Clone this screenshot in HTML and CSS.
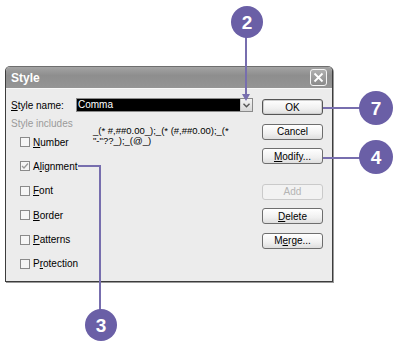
FILE: index.html
```html
<!DOCTYPE html>
<html lang="en">
<head>
    <meta charset="UTF-8">
    <title>Style</title>
    <link rel="stylesheet" href="styles.css">
</head>
<body>
    <div class="page">
        <div class="dialog">
            <div class="titlebar">
                <span class="title">Style</span>
                <span class="close">
                    <svg width="11" height="11" viewBox="0 0 11 11"><path d="M1.5 1.5 L9.5 9.5 M9.5 1.5 L1.5 9.5" stroke="#fff" stroke-width="1.8" fill="none"/></svg>
                </span>
            </div>
            <div class="dialog-body">
                <div class="left">
                    <div class="name-row">
                        <span class="name-label"><u>S</u>tyle name:</span>
                        <div class="combo">
                            <span class="combo-text">Comma</span>
                            <span class="combo-btn">
                                <svg width="7" height="5" viewBox="0 0 7 5"><path d="M0.5 0.8 L3.5 3.8 L6.5 0.8" stroke="#555" stroke-width="1.4" fill="none"/></svg>
                            </span>
                        </div>
                    </div>
                    <div class="group-label">Style includes</div>
                    <div class="checks">
                        <div class="check-row">
                            <span class="box"></span>
                            <span class="check-label number-label"><u>N</u>umber</span>
                            <span class="format">_(* #,##0.00_);_(* (#,##0.00);_(*<br>"-"??_);_(@_)</span>
                        </div>
                        <div class="check-row">
                            <span class="box checked">
                                <svg width="8" height="8" viewBox="0 0 8 8"><path d="M1 4 L3 6 L7 1.5" stroke="#9a9a9a" stroke-width="1.3" fill="none"/></svg>
                            </span>
                            <span class="check-label">A<u>l</u>ignment</span>
                        </div>
                        <div class="check-row">
                            <span class="box"></span>
                            <span class="check-label"><u>F</u>ont</span>
                        </div>
                        <div class="check-row">
                            <span class="box"></span>
                            <span class="check-label"><u>B</u>order</span>
                        </div>
                        <div class="check-row">
                            <span class="box"></span>
                            <span class="check-label"><u>P</u>atterns</span>
                        </div>
                        <div class="check-row">
                            <span class="box"></span>
                            <span class="check-label">P<u>r</u>otection</span>
                        </div>
                    </div>
                </div>
                <div class="buttons">
                    <button class="btn btn-ok">OK</button>
                    <button class="btn">Cancel</button>
                    <button class="btn"><u>M</u>odify...</button>
                    <button class="btn btn-add" disabled>Add</button>
                    <button class="btn"><u>D</u>elete</button>
                    <button class="btn">M<u>e</u>rge...</button>
                </div>
            </div>
        </div>

        <svg class="callouts" width="400" height="348" viewBox="0 0 400 348">
            <g stroke="#776eae" stroke-width="2" fill="none">
                <line x1="246" y1="36" x2="246" y2="99"/>
                <line x1="323" y1="108" x2="362" y2="108"/>
                <line x1="323" y1="158" x2="362" y2="158"/>
                <polyline points="78,166 100,166 100,312"/>
            </g>
            <path d="M242 94 L246 101 L250 94 Z" fill="#776eae"/>
            <g fill="#6a5fa6">
                <circle cx="247" cy="22" r="16"/>
                <circle cx="376" cy="108" r="17"/>
                <circle cx="376" cy="157" r="17"/>
                <circle cx="101" cy="325" r="16"/>
            </g>
            <g class="callout-num" fill="#fff" text-anchor="middle">
                <text x="247" y="29">2</text>
                <text x="376" y="115">7</text>
                <text x="376" y="164">4</text>
                <text x="101" y="332">3</text>
            </g>
        </svg>
    </div>
</body>
</html>
```

FILE: styles.css
```css
* {
    margin: 0;
    padding: 0;
    box-sizing: border-box;
}
body {
    background: #fff;
    font-family: "Liberation Sans", Arial, sans-serif;
    font-size: 10px;
    color: #000;
}
.page {
    position: relative;
    width: 400px;
    height: 348px;
    padding-top: 66px;
    padding-left: 5px;
}
.dialog {
    width: 328px;
    height: 216px;
    border: 1px solid #3c3c3c;
    border-top-color: #6e6e6e;
    border-radius: 5px 5px 0 0;
    background: #ececec;
    box-shadow: 1px 1px 0 #9a9a9a;
    display: flex;
    flex-direction: column;
}
.titlebar {
    height: 21px;
    background: linear-gradient(#a4a4a4, #8e8e8e 40%, #959595);
    border-radius: 4px 4px 0 0;
    display: flex;
    align-items: center;
    justify-content: space-between;
    padding: 0 5px 0 5px;
}
.title {
    color: #fff;
    font-weight: bold;
    font-size: 12px;
}
.close {
    width: 17px;
    height: 17px;
    border: 1px solid #f4f4f4;
    border-radius: 3px;
    background: linear-gradient(#b0b0b0, #8a8a8a);
    display: flex;
    align-items: center;
    justify-content: center;
}
.dialog-body {
    flex: 1;
    display: flex;
    border-top: 1px solid #f8f8f8;
}
.left {
    flex: 1;
    padding-left: 5px;
    padding-top: 9px;
}
.name-row {
    display: flex;
    align-items: center;
    height: 14px;
}
.name-label {
    width: 65px;
}
.combo {
    width: 177px;
    height: 14px;
    border: 1px solid #8a8a8a;
    background: #000;
    display: flex;
}
.combo-text {
    flex: 1;
    color: #fff;
    line-height: 12px;
    padding-left: 1px;
}
.combo-btn {
    width: 12px;
    background: linear-gradient(#f4f4f4, #d8d8d8);
    border-left: 1px solid #c8c8c8;
    display: flex;
    align-items: center;
    justify-content: center;
}
.group-label {
    color: #9a9a9a;
    margin-top: 6px;
    line-height: 12px;
}
.checks {
    margin-top: 7px;
    padding-left: 9px;
    display: flex;
    flex-direction: column;
    gap: 14.4px;
}
.check-row {
    display: flex;
    align-items: center;
    height: 10px;
}
.box {
    width: 10px;
    height: 10px;
    border: 1px solid #8a8a8a;
    background: #f6f6f6;
    margin-right: 3px;
    display: flex;
    align-items: center;
    justify-content: center;
}
.number-label {
    width: 60px;
}
.format {
    align-self: flex-start;
    margin-top: -11px;
    line-height: 10px;
    font-size: 9.5px;
    white-space: nowrap;
}
.buttons {
    width: 61px;
    margin-right: 9px;
    padding-top: 10px;
    display: flex;
    flex-direction: column;
}
.btn {
    height: 16px;
    border: 1px solid #6e6e6e;
    border-radius: 3px;
    background: linear-gradient(#ffffff, #f0f0f0 60%, #dedede);
    font-family: "Liberation Sans", Arial, sans-serif;
    font-size: 10px;
    color: #000;
    margin-bottom: 8.5px;
}
.btn-ok {
    border-color: #555;
    box-shadow: inset 0 0 0 1px #cfcfcf;
}
.btn-add {
    margin-top: 11px;
    border-color: #cacaca;
    color: #b4b4b4;
    background: #f2f2f2;
}
.callouts {
    position: absolute;
    left: 0;
    top: 0;
}
.callout-num {
    font-family: "Liberation Sans", Arial, sans-serif;
    font-weight: bold;
    font-size: 19px;
}
```
